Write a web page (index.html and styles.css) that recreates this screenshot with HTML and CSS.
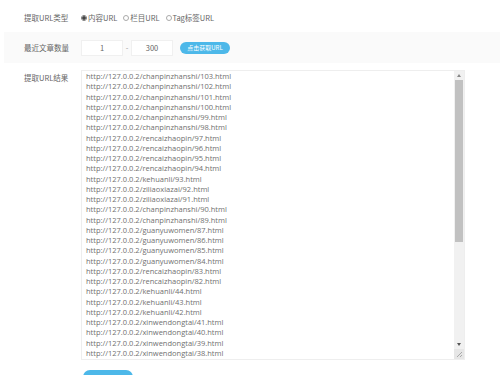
FILE: index.html
```html
<!DOCTYPE html>
<html>
<head>
<meta charset="utf-8">
<link rel="stylesheet" href="styles.css">
</head>
<body>
<div class="form">
  <div class="row row-type">
    <div class="label">提取URL类型</div>
    <div class="field radios">
      <label class="radio"><span class="dot checked"></span>内容URL</label>
      <label class="radio"><span class="dot"></span>栏目URL</label>
      <label class="radio"><span class="dot"></span>Tag标签URL</label>
    </div>
  </div>
  <div class="row row-count">
    <div class="label">最近文章数量</div>
    <div class="field count">
      <div class="input">1</div>
      <span class="dash">-</span>
      <div class="input">300</div>
      <button class="btn">点击获取URL</button>
    </div>
  </div>
  <div class="row row-result">
    <div class="label">提取URL结果</div>
    <div class="field">
      <div class="result">
        <div class="lines">
          <div>http://127.0.0.2/chanpinzhanshi/103.html</div>
          <div>http://127.0.0.2/chanpinzhanshi/102.html</div>
          <div>http://127.0.0.2/chanpinzhanshi/101.html</div>
          <div>http://127.0.0.2/chanpinzhanshi/100.html</div>
          <div>http://127.0.0.2/chanpinzhanshi/99.html</div>
          <div>http://127.0.0.2/chanpinzhanshi/98.html</div>
          <div>http://127.0.0.2/rencaizhaopin/97.html</div>
          <div>http://127.0.0.2/rencaizhaopin/96.html</div>
          <div>http://127.0.0.2/rencaizhaopin/95.html</div>
          <div>http://127.0.0.2/rencaizhaopin/94.html</div>
          <div>http://127.0.0.2/kehuanli/93.html</div>
          <div>http://127.0.0.2/ziliaoxiazai/92.html</div>
          <div>http://127.0.0.2/ziliaoxiazai/91.html</div>
          <div>http://127.0.0.2/chanpinzhanshi/90.html</div>
          <div>http://127.0.0.2/chanpinzhanshi/89.html</div>
          <div>http://127.0.0.2/guanyuwomen/87.html</div>
          <div>http://127.0.0.2/guanyuwomen/86.html</div>
          <div>http://127.0.0.2/guanyuwomen/85.html</div>
          <div>http://127.0.0.2/guanyuwomen/84.html</div>
          <div>http://127.0.0.2/rencaizhaopin/83.html</div>
          <div>http://127.0.0.2/rencaizhaopin/82.html</div>
          <div>http://127.0.0.2/kehuanli/44.html</div>
          <div>http://127.0.0.2/kehuanli/43.html</div>
          <div>http://127.0.0.2/kehuanli/42.html</div>
          <div>http://127.0.0.2/xinwendongtai/41.html</div>
          <div>http://127.0.0.2/xinwendongtai/40.html</div>
          <div>http://127.0.0.2/xinwendongtai/39.html</div>
          <div>http://127.0.0.2/xinwendongtai/38.html</div>
        </div>
        <div class="scrollbar">
          <div class="arrow up"></div>
          <div class="track">
            <div class="thumb"></div>
          </div>
          <div class="arrow down"></div>
          <div class="resizer">
            <svg width="9" height="9" viewBox="0 0 9 9"><path d="M8 3 L3 8 M8 6 L6 8" stroke="#999" stroke-width="0.8" fill="none"/></svg>
          </div>
        </div>
      </div>
      <button class="btn btn-submit"></button>
    </div>
  </div>
</div>
</body>
</html>
```

FILE: styles.css
```css
* { box-sizing: border-box; }
html, body { margin: 0; padding: 0; background: #fff; overflow: hidden; }
body {
  font-family: "Noto Sans CJK SC", "Open Sans", sans-serif;
  font-size: 7.5px;
  color: #666;
}
.form { width: 500px; }
.row { display: flex; align-items: flex-start; }
.label {
  width: 57px;
  padding-left: 24px;
  box-sizing: content-box;
  flex: none;
  white-space: nowrap;
  color: #666;
}
.row-type { height: 32px; padding-top: 12px; }
.radios { display: flex; gap: 6px; }
.radio { display: flex; align-items: center; gap: 1px; }
.dot {
  width: 6px; height: 6px;
  border: 1px solid #aaa;
  border-radius: 50%;
  display: inline-block;
  background: #fff;
}
.dot.checked { border-color: #777; background: radial-gradient(circle, #444 0 1.5px, #fff 2px); }

.row-count {
  margin-left: 4px;
  height: 31px;
  background: #fafafa;
  align-items: center;
}
.row-count .label { padding-left: 20px; }
.count { display: flex; align-items: center; }
.input {
  width: 42px; height: 16px;
  background: #fff;
  border: 1px solid #f0f0f0;
  text-align: center;
  line-height: 14px;
  color: #666;
}
.dash { width: 8px; text-align: center; color: #999; }
.btn {
  margin-left: 7px;
  width: 50px; height: 12px;
  border: none;
  border-radius: 6px;
  background: #4db8e9;
  color: #fff;
  font-family: inherit;
  font-size: 6px;
  line-height: 12px;
  padding: 0;
}
.row-result { padding-top: 7px; }
.row-result .label { padding-top: 2px; }
.result {
  width: 384px;
  height: 290px;
  border: 1px solid #eee;
  display: flex;
  background: #fff;
}
.lines {
  flex: 1;
  overflow: hidden;
  padding: 0 0 0 4px;
  line-height: 10.25px;
  font-family: "Open Sans", "Noto Sans CJK SC", sans-serif;
  font-size: 7.5px;
  color: #707070;
}
.scrollbar {
  width: 10px;
  background: #f1f1f1;
  display: flex;
  flex-direction: column;
}
.arrow { height: 9px; display: flex; justify-content: center; align-items: center; }
.arrow.up::before {
  content: ""; border-left: 2.5px solid transparent; border-right: 2.5px solid transparent;
  border-bottom: 3px solid #888;
}
.arrow.down::before {
  content: ""; border-left: 2.5px solid transparent; border-right: 2.5px solid transparent;
  border-top: 3px solid #555;
}
.track { flex: 1; padding: 0 1px; }
.thumb { height: 162px; background: #c1c1c1; }
.resizer { height: 10px; background: #e6e6e6; }
.resizer svg { display: block; }
.btn-submit {
  display: block;
  margin: 10px 0 0 2px;
  width: 50px;
  height: 14px;
  border-radius: 7px;
}
```
